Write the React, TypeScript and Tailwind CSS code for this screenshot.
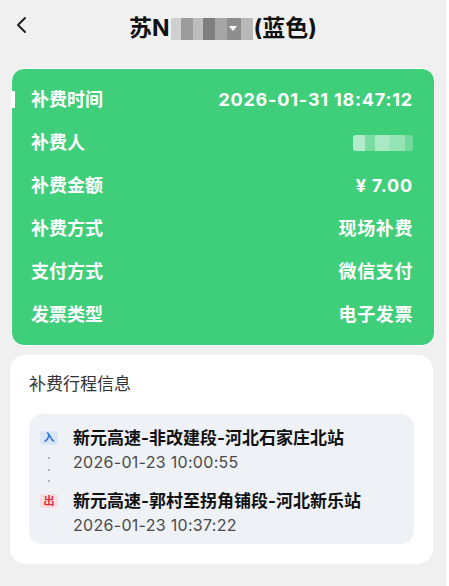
import type { ReactNode } from "react";

const font = { fontFamily: 'Inter, "Noto Sans CJK SC", "Noto Sans", sans-serif' };

const rows: { label: string; value: ReactNode; wide?: boolean }[] = [
  { label: "补费时间", value: "2026-01-31 18:47:12", wide: true },
  {
    label: "补费人",
    value: (
      <span className="flex h-[16px] w-[60px] items-center overflow-hidden rounded-[3px]">
        <span className="h-full w-[12px] bg-white/60" />
        <span className="h-full w-[10px] bg-white/30" />
        <span className="h-full w-[14px] bg-white/55" />
        <span className="h-full w-[16px] bg-white/45" />
        <span className="h-full w-[8px] bg-white/25" />
      </span>
    ),
  },
  { label: "补费金额", value: "¥ 7.00", wide: true },
  { label: "补费方式", value: "现场补费" },
  { label: "支付方式", value: "微信支付" },
  { label: "发票类型", value: "电子发票" },
];

const PlateBlur = () => (
  <span className="relative mx-[1px] inline-flex h-[22px] w-[82px] translate-y-[1px] overflow-hidden">
    <span className="h-full w-[10px] bg-[#cfcfcf]" />
    <span className="h-full w-[12px] bg-[#9c9c9c]" />
    <span className="h-full w-[10px] bg-[#bdbdbd]" />
    <span className="h-full w-[12px] bg-[#7e7e7e]" />
    <span className="h-full w-[12px] bg-[#a6a6a6]" />
    <span className="h-full w-[14px] bg-[#8e8e8e]" />
    <span className="h-full w-[12px] bg-[#b8b8b8]" />
    <span className="absolute left-[58px] top-[8px] h-0 w-0 border-x-[4px] border-t-[5px] border-x-transparent border-t-white" />
  </span>
);

const Badge = ({ text, tone }: { text: string; tone: "in" | "out" }) => (
  <span
    className={
      tone === "in"
        ? "flex h-[14px] w-[18px] items-center justify-center rounded-[3px] bg-[#d8e6f8] text-[11px] font-bold leading-none text-[#2b6fd4]"
        : "flex h-[14px] w-[18px] items-center justify-center rounded-[3px] bg-[#f8dce0] text-[11px] font-bold leading-none text-[#de2f40]"
    }
  >
    {text}
  </span>
);

const Stop = ({
  tone,
  name,
  time,
  dots,
}: {
  tone: "in" | "out";
  name: string;
  time: string;
  dots?: boolean;
}) => (
  <div className="flex">
    <div className="flex w-[18px] flex-col items-center">
      <div className="flex h-[24px] items-center">
        <Badge text={tone === "in" ? "入" : "出"} tone={tone} />
      </div>
      {dots && (
        <div className="flex flex-col items-center gap-[9.5px] pb-[7px] pt-[7px]">
          <span className="h-[2px] w-[2px] rounded-full bg-[#9aa0a8]" />
          <span className="h-[2px] w-[2px] rounded-full bg-[#9aa0a8]" />
          <span className="h-[2px] w-[2px] rounded-full bg-[#9aa0a8]" />
        </div>
      )}
    </div>
    <div className="ml-[15px]">
      <div className="h-[24px] text-[17px] font-bold leading-[24px] text-[#111]">{name}</div>
      <div className="h-[24px] text-[16px] leading-[24px] tracking-[0.3px] text-[#4a4a4a]">{time}</div>
    </div>
  </div>
);

export default function App() {
  return (
    <div className="flex min-h-[586px] w-[449px] bg-white" style={font}>
      <div className="flex w-[446px] flex-col bg-[#f0f0f0] pb-[23px]">
        <header className="relative flex h-[56px] items-center justify-center">
          <svg
            className="absolute left-[15px] top-[16px]"
            width="14"
            height="18"
            viewBox="0 0 14 18"
            fill="none"
            stroke="#222"
            strokeWidth="2"
            strokeLinecap="round"
            strokeLinejoin="round"
          >
            <polyline points="10,2 3,9 10,16" />
          </svg>
          <h1 className="flex items-center text-[23px] font-bold leading-none text-[#111]">
            <span>苏N</span>
            <PlateBlur />
            <span>(蓝色)</span>
          </h1>
        </header>

        <section className="relative mx-[11px] mt-[12px] rounded-[13px] border-[1.5px] border-white bg-[#3fce7a] pb-[9px] pt-[9px]">
          <span className="absolute left-[-1px] top-[22px] h-[17px] w-[4px] bg-white" />
          {rows.map((r) => (
            <div
              key={r.label}
              className="flex h-[43px] items-center justify-between pl-[19px] pr-[21px] text-[18px] font-bold text-white"
            >
              <span>{r.label}</span>
              <span className={r.wide ? "tracking-[0.8px]" : "tracking-[0.6px]"}>{r.value}</span>
            </div>
          ))}
        </section>

        <section className="ml-[10px] mr-[13px] mt-[9px] rounded-[15px] bg-white px-[19px] pb-[20px] pt-[17px]">
          <h2 className="text-[17px] leading-[24px] text-[#333]">补费行程信息</h2>
          <div className="mt-[18px] rounded-[13px] bg-[#eef1f6] pb-[7px] pl-[11px] pt-[12px]">
            <Stop tone="in" name="新元高速-非改建段-河北石家庄北站" time="2026-01-23 10:00:55" dots />
            <Stop tone="out" name="新元高速-郭村至拐角铺段-河北新乐站" time="2026-01-23 10:37:22" />
          </div>
        </section>
      </div>
      <div className="flex-1 bg-white" />
    </div>
  );
}
